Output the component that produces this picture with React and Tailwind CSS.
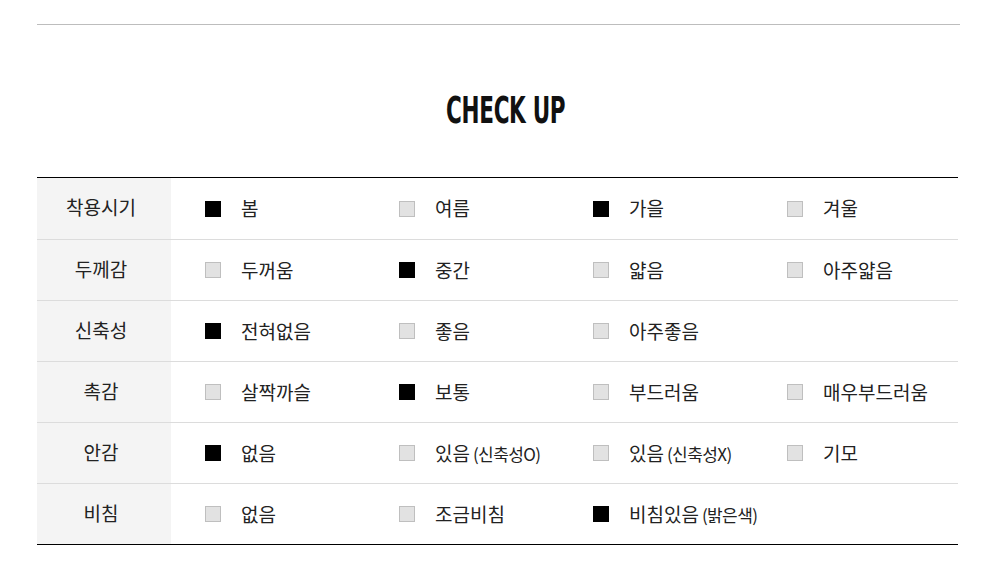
import React from "react";

const rows = [
  { label: "착용시기", items: [["봄", true], ["여름", false], ["가을", true], ["겨울", false]] },
  { label: "두께감", items: [["두꺼움", false], ["중간", true], ["얇음", false], ["아주얇음", false]] },
  { label: "신축성", items: [["전혀없음", true], ["좋음", false], ["아주좋음", false]] },
  { label: "촉감", items: [["살짝까슬", false], ["보통", true], ["부드러움", false], ["매우부드러움", false]] },
  { label: "안감", items: [["없음", true], ["있음", false, "(신축성O)"], ["있음", false, "(신축성X)"], ["기모", false]] },
  { label: "비침", items: [["없음", false], ["조금비침", false], ["비침있음", true, "(밝은색)"]] },
];

const Box = ({ on }) => (
  <span
    className={`inline-block w-4 h-4 shrink-0 ${
      on ? "bg-black" : "bg-[#e2e2e2] border border-[#bfbfbf]"
    }`}
  />
);

const App = () => {
  return (
    <div className="w-[1000px] h-[566px] bg-white font-['Noto_Sans_CJK_KR',sans-serif] text-[#222]">
      <div className="pt-6 px-[37px] pr-[40px]">
        <div className="border-t border-[#bdbdbd]" />
      </div>

      <div className="h-[152px] flex items-center justify-center pt-[18px] pl-[12px]">
        <h2 className="font-['DejaVu_Sans_Condensed',sans-serif] font-bold text-[38px] leading-none tracking-[-0.5px] scale-x-[0.63] text-[#111]">
          CHECK UP
        </h2>
      </div>

      <div className="mx-[37px] w-[921px] border-t border-b border-black">
        {rows.map((row, i) => (
          <div
            key={row.label}
            className={`flex ${i === 0 ? "h-[61px]" : "h-[61px]"} ${i > 0 ? "border-t border-[#dcdcdc]" : ""}`}
          >
            <div className="w-[134px] bg-[#f4f4f4] flex items-center justify-center text-[19px] pb-[2px] pr-[6px]">
              {row.label}
            </div>
            <div className="flex flex-1">
              {row.items.map(([text, on, sub], j) => (
                <div key={j} className="w-[194px] pl-[34px] flex items-center gap-5">
                  <Box on={on} />
                  <span className="text-[19px] leading-none whitespace-nowrap pb-[2px]">
                    {text}
                    {sub && (
                      <span className="text-[17px] tracking-[-0.6px] ml-[3px]">{sub}</span>
                    )}
                  </span>
                </div>
              ))}
            </div>
          </div>
        ))}
      </div>
    </div>
  );
};

export default App;
